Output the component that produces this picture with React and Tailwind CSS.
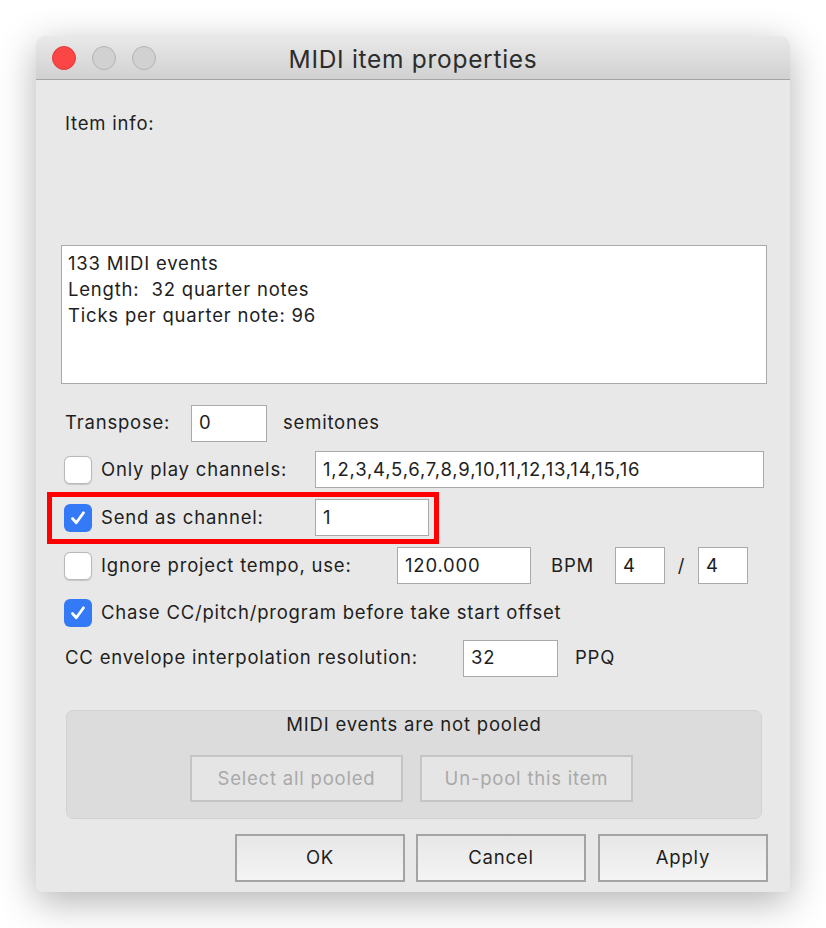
import React from "react";

const font = { fontFamily: "Inter, 'Noto Sans', 'Liberation Sans', sans-serif" };

function Box({ checked }) {
  if (checked) {
    return (
      <div className="w-[28px] h-[28px] rounded-[6px] bg-[#3479f6] flex items-center justify-center shrink-0">
        <svg width="18" height="18" viewBox="0 0 18 18" fill="none">
          <path d="M3.5 9.5 L7.3 13.8 L14.5 3.8" stroke="white" strokeWidth="2.8" strokeLinecap="round" strokeLinejoin="round" />
        </svg>
      </div>
    );
  }
  return (
    <div className="w-[28px] h-[28px] rounded-[6px] bg-white border border-[#b9b9b9] shadow-[0_0.5px_1px_rgba(0,0,0,0.15)] shrink-0" />
  );
}

function Field({ w, value }) {
  return (
    <div className={`${w} h-[37px] bg-white border border-[#a9a9a9] flex items-center pl-[7px] shrink-0`}>
      {value}
    </div>
  );
}

export default function App() {
  return (
    <div className="w-[826px] min-h-[928px] bg-white pt-[36px] pl-[36px]" style={font}>
      <div className="w-[754px] h-[856px] rounded-t-[10px] rounded-b-[6px] bg-[#e8e8e8] overflow-hidden flex flex-col shadow-[0_10px_38px_rgba(0,0,0,0.3)]">
        {/* Title bar */}
        <div className="h-[44px] shrink-0 bg-gradient-to-b from-[#e9e9e9] to-[#d1d1d1] border-b border-[#a5a5a5] flex items-center relative">
          <div className="flex items-center gap-[16px] pl-[16px]">
            <div className="w-[24px] h-[24px] rounded-full bg-[#fc4545] border border-[#e03a3a]" />
            <div className="w-[24px] h-[24px] rounded-full bg-[#d1d1d1] border border-[#b3b3b3]" />
            <div className="w-[24px] h-[24px] rounded-full bg-[#d1d1d1] border border-[#b3b3b3]" />
          </div>
          <div className="absolute inset-0 flex items-center justify-center pt-[3px] text-[24.5px] tracking-[0.7px] text-[#2c2c2c] pointer-events-none">
            MIDI item properties
          </div>
        </div>

        {/* Body */}
        <div className="flex flex-col text-[18.5px] tracking-[0.8px] text-[#1e1e1e]">
          <div className="mt-[30px] ml-[29px] h-[26px] leading-[26px]">Item info:</div>

          <div className="mt-[109px] ml-[25px] w-[706px] h-[139px] bg-white border border-[#a9a9a9] pl-[6px] pt-[4px] leading-[26px]">
            <div>133 MIDI events</div>
            <div className="whitespace-pre">Length:  32 quarter notes</div>
            <div>Ticks per quarter note: 96</div>
          </div>

          {/* Transpose */}
          <div className="mt-[16px] h-[46px] flex items-center pl-[29px]">
            <div className="w-[126px]">Transpose:</div>
            <Field w="w-[76px]" value="0" />
            <div className="ml-[16px]">semitones</div>
          </div>

          {/* Only play channels */}
          <div className="h-[47px] flex items-center pl-[28px]">
            <div className="w-[251px] flex items-center">
              <Box />
              <span className="ml-[9px]">Only play channels:</span>
            </div>
            <Field w="w-[449px]" value="1,2,3,4,5,6,7,8,9,10,11,12,13,14,15,16" />
          </div>

          {/* Send as channel */}
          <div className="h-[49px] flex items-center pl-[28px] relative">
            <div className="absolute left-[11px] top-[-1px] w-[392px] h-[52px] border-[5px] border-[#ff0000] pointer-events-none" />
            <div className="w-[251px] flex items-center">
              <Box checked />
              <span className="ml-[9px]">Send as channel:</span>
            </div>
            <Field w="w-[114px]" value="1" />
          </div>

          {/* Ignore project tempo */}
          <div className="h-[47px] flex items-center pl-[28px]">
            <div className="w-[333px] flex items-center">
              <Box />
              <span className="ml-[9px]">Ignore project tempo, use:</span>
            </div>
            <Field w="w-[134px]" value="120.000" />
            <div className="w-[84px] pl-[20px]">BPM</div>
            <Field w="w-[50px]" value="4" />
            <div className="w-[33px] text-center">/</div>
            <Field w="w-[50px]" value="4" />
          </div>

          {/* Chase */}
          <div className="h-[47px] flex items-center pl-[28px]">
            <Box checked />
            <span className="ml-[9px]">Chase CC/pitch/program before take start offset</span>
          </div>

          {/* CC envelope */}
          <div className="h-[44px] flex items-center pl-[29px]">
            <div className="w-[398px]">CC envelope interpolation resolution:</div>
            <Field w="w-[95px]" value="32" />
            <div className="ml-[17px]">PPQ</div>
          </div>

          {/* Pool group */}
          <div className="mt-[30px] ml-[30px] w-[696px] h-[109px] bg-[#dcdcdc] border border-[#d2d2d2] rounded-[7px] flex flex-col">
            <div className="text-center leading-[24px] mt-[1px]">MIDI events are not pooled</div>
            <div className="mt-[19px] ml-[123px] flex gap-[17px]">
              <div className="w-[213px] h-[47px] border-2 border-[#c5c5c5] bg-[#e5e5e5] text-[#a9a9a9] flex items-center justify-center">
                Select all pooled
              </div>
              <div className="w-[213px] h-[47px] border-2 border-[#c5c5c5] bg-[#e5e5e5] text-[#a9a9a9] flex items-center justify-center">
                Un-pool this item
              </div>
            </div>
          </div>

          {/* Bottom buttons */}
          <div className="mt-[15px] flex justify-end pr-[22px]">
            <div className="w-[170px] h-[48px] border-2 border-[#a3a3a3] bg-gradient-to-b from-[#e7e7e7] to-[#f4f4f4] flex items-center justify-center">
              OK
            </div>
            <div className="ml-[11px] w-[170px] h-[48px] border-2 border-[#a3a3a3] bg-gradient-to-b from-[#e7e7e7] to-[#f4f4f4] flex items-center justify-center">
              Cancel
            </div>
            <div className="ml-[12px] w-[170px] h-[48px] border-2 border-[#a3a3a3] bg-gradient-to-b from-[#e7e7e7] to-[#f4f4f4] flex items-center justify-center">
              Apply
            </div>
          </div>
        </div>
      </div>
    </div>
  );
}
